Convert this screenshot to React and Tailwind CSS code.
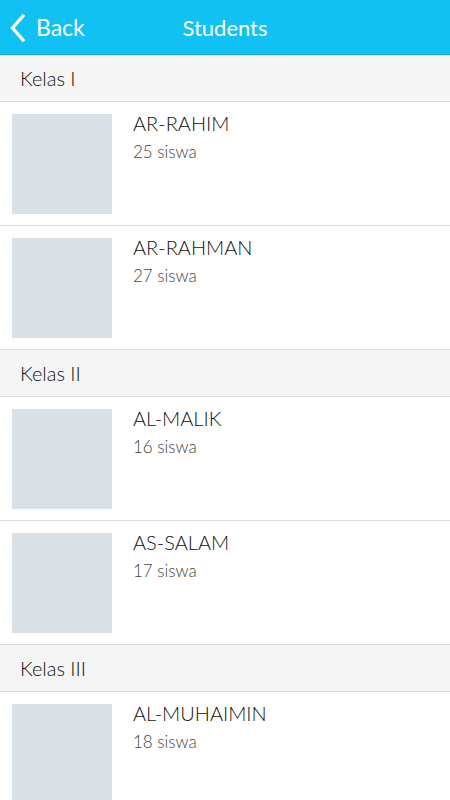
import React from "react";

const groups = [
  { name: "Kelas I", items: [{ t: "AR-RAHIM", n: 25 }, { t: "AR-RAHMAN", n: 27 }] },
  { name: "Kelas II", items: [{ t: "AL-MALIK", n: 16 }, { t: "AS-SALAM", n: 17 }] },
  { name: "Kelas III", items: [{ t: "AL-MUHAIMIN", n: 18 }] },
];

export default function App() {
  return (
    <div className="w-[450px] h-[800px] overflow-hidden bg-white font-['Lato','Open_Sans',sans-serif]">
      <div className="relative h-[55px] bg-[#11c1f3] border-b border-[#0fadd9] flex items-center">
        <div className="flex items-center pl-[10px] gap-[10px] text-white">
          <svg width="16" height="28" viewBox="0 0 16 28" className="mt-[1px]">
            <polyline points="13,2 2.5,14 13,26" fill="none" stroke="white" strokeWidth="3.2" strokeLinecap="square" />
          </svg>
          <span className="text-[23px] leading-none">Back</span>
        </div>
        <div className="absolute inset-0 flex items-center justify-center text-white text-[22px] pointer-events-none">
          Students
        </div>
      </div>
      {groups.map((g) => (
        <div key={g.name}>
          <div className="h-[47px] bg-[#f5f5f5] border-b border-[#dddddd] pl-[20px] flex items-center text-[20px] text-[#111] font-light">
            {g.name}
          </div>
          {g.items.map((it) => (
            <div key={it.t} className="h-[124px] border-b border-[#dddddd] flex pl-[12px] pt-[12px]">
              <div className="w-[100px] h-[100px] bg-[#d9e0e6] shrink-0" />
              <div className="ml-[21px] -mt-[3px]">
                <div className="text-[20px] leading-[24px] text-[#111] font-light">{it.t}</div>
                <div className="mt-[5px] text-[17px] leading-[24px] text-[#444] font-light">{it.n} siswa</div>
              </div>
            </div>
          ))}
        </div>
      ))}
    </div>
  );
}
